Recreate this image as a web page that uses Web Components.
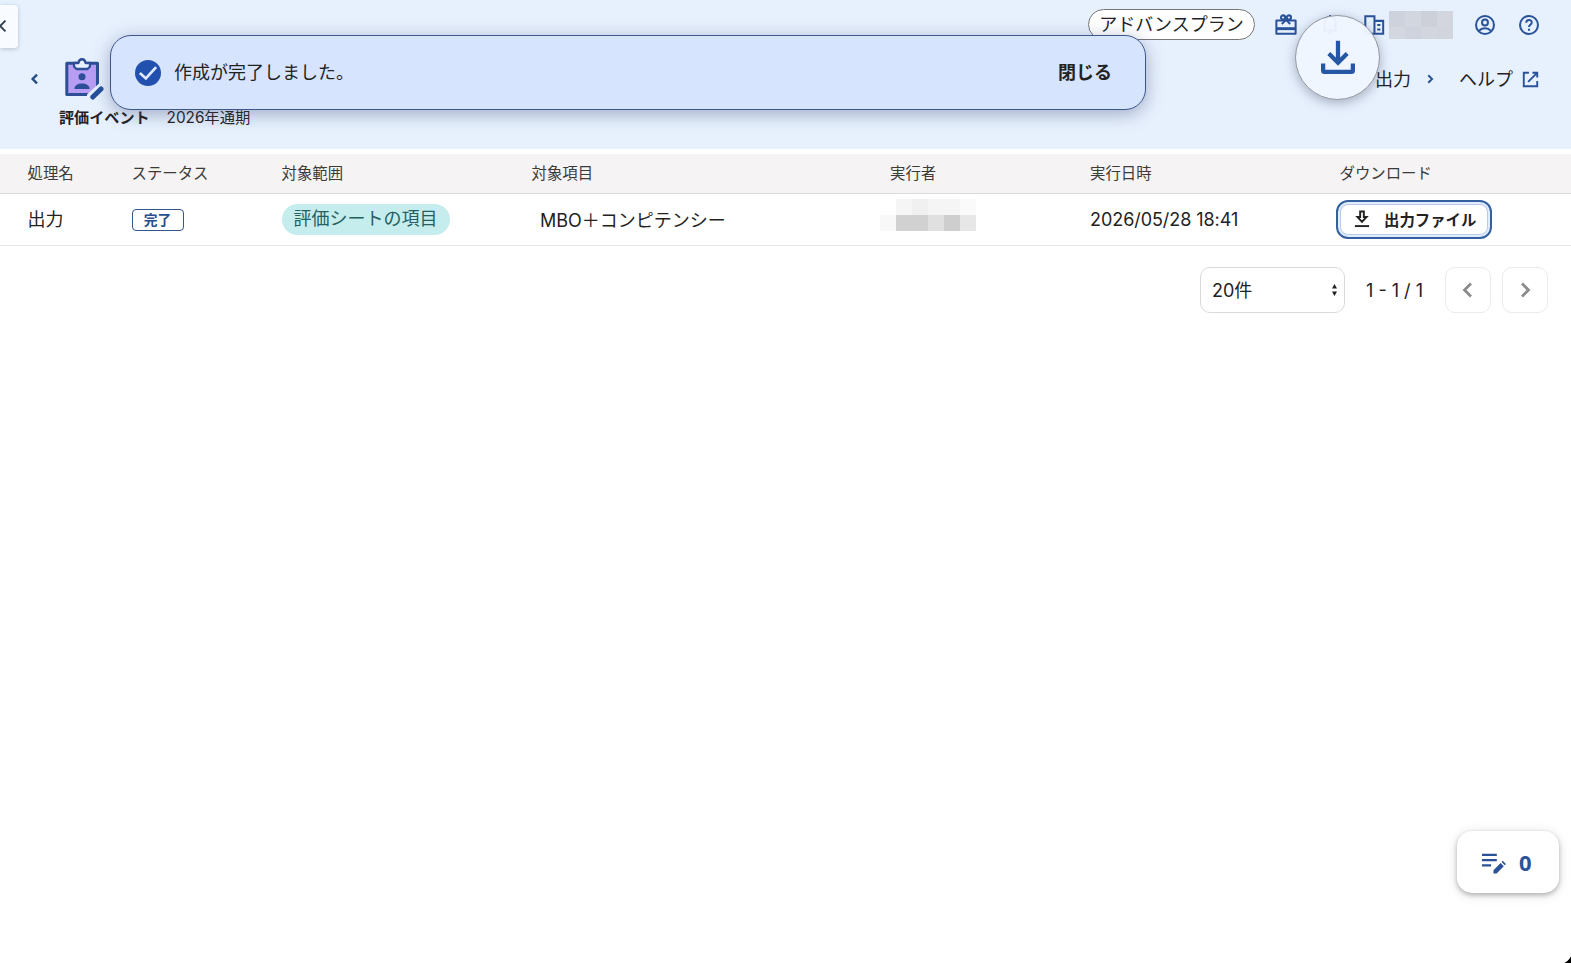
<!DOCTYPE html>
<html lang="ja">
<head>
<meta charset="utf-8">
<title>評価イベント</title>
<style>
  html, body {
    margin: 0;
    height: 100%;
    overflow: hidden;
  }

  body {
    background: #fff;
    color: #23221f;
    font-family: Inter, "Noto Sans CJK JP", sans-serif;
    font-size: 18px;
  }
</style>
</head>
<body>
<app-shell>
  <app-header slot="header">
    <plan-badge slot="tools">アドバンスプラン</plan-badge>
    <span slot="event">評価イベント</span>
    <span slot="term">2026年通期</span>
    <span slot="crumb">出力</span>
    <span slot="help">ヘルプ</span>
  </app-header>
  <toast-message slot="overlay" action="閉じる">作成が完了しました。</toast-message>
  <download-bubble slot="overlay"></download-bubble>
  <job-table></job-table>
  <list-pager size="20件" range="1 - 1 / 1"></list-pager>
  <memo-counter slot="overlay">0</memo-counter>
</app-shell>

<script>
const ICONS = {
  left: '<path d="M15 5.500l-6.500 6.500 6.500 6.500"/>',
  right: '<path d="M9 5.500l6.500 6.500L9 18.500"/>',
  gift: '<path d="M1.500 7h21v14.500h-21z" stroke-linejoin="round"/><path d="M1.500 16h21" stroke-width="3.200"/><path d="M12 6L7.500 11M12 6l4.500 5"/><circle cx="8.800" cy="3.800" r="2.300"/><circle cx="15.200" cy="3.800" r="2.300"/>',
  bell: '<path d="M4 18h16M6 18v-9a6 6 0 0 1 12 0v9M12 1v2M10 21h4"/>',
  building: '<path d="M12.500 7.500V2.500H2.500v19h10M12.500 7.500h9.500v14h-9.500z"/><path d="M15.500 12h3.500M15.500 17h3.500"/>',
  user: '<circle cx="12" cy="12" r="9.800"/><circle cx="12" cy="9.300" r="3.200"/><path d="M5.500 18.500c3.500-4 9.500-4 13 0"/>',
  help: '<circle cx="12" cy="12" r="9.800"/><path d="M9 9.500c0-4 6-4 6-.3 0 2.400-3 2.600-3 5"/><path d="M12 16v2.300"/>',
  external: '<path d="M10 3.500H3.500v17h17V14M14.500 3.500h6v6M20 4L9 15"/>',
  download: '<path d="M12 .5v15M5.500 9.500l6.500 6.500 6.500-6.500M1.500 16.500v5a1 1 0 0 0 1 1h19a1 1 0 0 0 1-1v-5"/>',
  file: '<path d="M9.800 3h4.400v6.500h3.300L12 15.500 6.500 9.500h3.300z"/><path d="M3.500 20.500h17"/>',
  check: '<circle cx="12" cy="12" r="12" fill="currentColor" stroke="none"/><path d="M4.500 12l5.500 5 9.500-10.500" stroke="#dfe9ff"/>',
  memo: '<path d="M1 4h15.500M1 9.500h15.500M1 15h9.500"/><path d="M13 23.500v-3.500l7.500-7.500 3.300 3.300-7.500 7.700zM21.500 11.500l1.200-1.200 3.300 3.300-1.200 1.200z" fill="currentColor" stroke="none"/>'
};

class UiIcon extends HTMLElement {
  static get observedAttributes() {
    return ['name'];
  }

  constructor() {
    super();
    this.attachShadow({ mode: 'open' });
  }

  attributeChangedCallback(name, oldValue, newValue) {
    this.shadowRoot.innerHTML = `
<style>
  :host {
    display: inline-block;
    flex: none;
    width: var(--size, 24px);
    height: var(--size, 24px);
    color: var(--icon-color, #2a5299);
  }

  svg {
    display: block;
    width: 100%;
    height: 100%;
    overflow: visible;
    fill: none;
    stroke: currentColor;
    stroke-width: var(--stroke, 2.2);
  }
</style>
<svg viewBox="0 0 24 24">${ICONS[newValue] || ''}</svg>
`;
  }
}

// Pixelated block that hides a name. Colours are listed row by row.
class MaskBlock extends HTMLElement {
  constructor() {
    super();
    this.attachShadow({ mode: 'open' });
  }

  connectedCallback() {
    const cells = this.getAttribute('cells').split(' ');
    this.shadowRoot.innerHTML = `
<style>
  :host {
    display: grid;
    flex: none;
    grid-template-columns: ${this.getAttribute('cols')};
    grid-template-rows: ${this.getAttribute('rows')};
  }
</style>
${cells.map((c) => `<i style="background:#${c}"></i>`).join('')}
`;
  }
}

class PlanBadge extends HTMLElement {
  constructor() {
    super();
    this.attachShadow({ mode: 'open' }).innerHTML = `
<style>
  :host {
    display: flex;
    align-items: center;
    justify-content: center;
    box-sizing: border-box;
    width: 167px;
    height: 31px;
    padding-bottom: 3px;
    border: 1px solid #77777a;
    border-radius: 16px;
    background: #fff;
    color: #23221f;
    white-space: nowrap;
  }
</style>
<slot></slot>
`;
  }
}

class AppHeader extends HTMLElement {
  constructor() {
    super();
    this.attachShadow({ mode: 'open' }).innerHTML = `
<style>
  :host {
    display: flex;
    height: 149px;
    background: #e7f1fe;
  }

  .rail {
    flex: none;
    box-sizing: border-box;
    width: 18px;
    height: 43px;
    margin-top: 5px;
    padding-top: 12px;
    border-radius: 0 4px 4px 0;
    background: #f8fbff;
    box-shadow: 0 1px 4px rgba(60, 70, 90, .3);
  }

  .rail ui-icon {
    --size: 20px;
    --icon-color: #333d4d;
    margin: -1px 0 0 -7px;
  }

  .main {
    flex: 1;
    display: flex;
    flex-direction: column;
    padding: 9px 31px 0 0;
  }

  .tools, .nav, .titles {
    display: flex;
    align-items: center;
  }

  .tools {
    justify-content: flex-end;
    height: 31px;
  }

  .tools ui-icon {
    --size: 22px;
  }

  .nav {
    height: 44px;
    margin-top: 17px;
    padding-left: 9px;
  }

  .back {
    --size: 16px;
    --stroke: 3.6;
    --icon-color: #264d82;
  }

  .board {
    width: 42px;
    height: 44px;
    margin-left: 19px;
  }

  .links {
    display: flex;
    align-items: center;
    margin-left: auto;
  }

  .links slot {
    display: block;
    padding-bottom: 2px;
  }

  .titles {
    height: 24px;
    margin-top: 5px;
    padding-left: 41px;
    gap: 17px;
    font-size: 15.3px;
    line-height: 24px;
  }

  .titles b {
    font-size: 15.1px;
    font-weight: 700;
  }
</style>
<div class="rail"><ui-icon name="left"></ui-icon></div>
<div class="main">
  <div class="tools">
    <slot name="tools"></slot>
    <ui-icon name="gift" style="margin-left:20px"></ui-icon>
    <ui-icon name="bell" style="margin-left:22px"></ui-icon>
    <ui-icon name="building" style="margin-left:22px"></ui-icon>
    <mask-block style="margin-left:4px" cols="16px 16px 16px 16px" rows="16px 12px"
      cells="ced2dc d2d6df cdd0d9 d3d6df d4d7e0 cfd3dd d3d6df d2d5de"></mask-block>
    <ui-icon name="user" style="margin-left:21px"></ui-icon>
    <ui-icon name="help" style="margin-left:22px"></ui-icon>
  </div>
  <div class="nav">
    <ui-icon class="back" name="left"></ui-icon>
    <svg class="board" viewBox="0 0 42 44">
      <path d="M4.800 6.200h30.700v31.300H4.800z" fill="#b79df3" stroke="#2e4f97" stroke-width="3" stroke-linejoin="round"/>
      <path d="M12 6h4.500c.5-5 6.500-5 7 0H28v3.500L25.500 12h-11L12 9.500z" fill="#e7f1fe" stroke="#2e4f97" stroke-width="2.300" stroke-linejoin="round"/>
      <circle cx="20" cy="19.800" r="3.500" fill="#2e4f97"/>
      <path d="M12.500 32c-1-7.500 16-7.500 15 0z" fill="#2e4f97"/>
      <path d="M25 44v-6.500L37.500 26 44 32v12z" fill="#e7f1fe"/>
      <path d="M30.800 40L39 32" stroke="#26509b" stroke-width="5" stroke-linecap="round"/>
    </svg>
    <div class="links">
      <slot name="crumb"></slot>
      <ui-icon name="right" style="--size:14px;--stroke:3.4;margin:0 22px 0 12px"></ui-icon>
      <slot name="help"></slot>
      <ui-icon name="external" style="--size:19px;--stroke:2.4;margin-left:8px"></ui-icon>
    </div>
  </div>
  <div class="titles"><b><slot name="event"></slot></b><slot name="term"></slot></div>
</div>
`;
  }
}

class ToastMessage extends HTMLElement {
  constructor() {
    super();
    this.attachShadow({ mode: 'open' }).innerHTML = `
<style>
  :host {
    position: absolute;
    top: 35px;
    left: 110px;
    display: flex;
    align-items: center;
    box-sizing: border-box;
    width: 1036px;
    height: 75px;
    padding: 0 33px 0 24px;
    border: 1.500px solid #3d568b;
    border-radius: 21px;
    background: #d6e4fe;
    box-shadow: 0 4px 18px rgba(60, 75, 120, .42);
  }

  ui-icon {
    --size: 26px;
    --icon-color: #2150ae;
    --stroke: 2.5;
    margin-right: 13px;
  }

  p {
    margin: 0;
    padding-bottom: 3px;
  }

  button {
    margin-left: auto;
    padding: 0 0 3px;
    border: 0;
    background: none;
    color: inherit;
    font: inherit;
    font-weight: 700;
  }
</style>
<ui-icon name="check"></ui-icon>
<p><slot></slot></p>
<button type="button"></button>
`;
    this.button = this.shadowRoot.querySelector('button');
    this.button.addEventListener('click', () => this.remove());
  }

  connectedCallback() {
    this.button.textContent = this.getAttribute('action');
  }
}

class DownloadBubble extends HTMLElement {
  constructor() {
    super();
    this.attachShadow({ mode: 'open' }).innerHTML = `
<style>
  :host {
    position: absolute;
    top: 15px;
    left: 1295px;
    display: flex;
    align-items: center;
    justify-content: center;
    box-sizing: border-box;
    width: 85px;
    height: 85px;
    border: 1px solid #8d929b;
    border-radius: 50%;
    background: rgba(240, 246, 255, .96);
    box-shadow: 0 3px 12px rgba(60, 70, 95, .4);
  }

  ui-icon {
    --size: 34px;
    --stroke: 3;
    --icon-color: #2458a4;
    margin-bottom: 1px;
  }
</style>
<ui-icon name="download"></ui-icon>
`;
  }
}

class JobTable extends HTMLElement {
  constructor() {
    super();
    this.attachShadow({ mode: 'open' }).innerHTML = `
<style>
  :host {
    display: block;
    margin-top: 5px;
  }

  .row {
    display: grid;
    grid-template-columns: 104px 150px 250px 358.5px 200px 249.5px 1fr;
    align-items: center;
    box-sizing: border-box;
    height: 52px;
    padding-left: 27.5px;
    border-bottom: 1.500px solid #e6e6e6;
  }

  .head {
    height: 40px;
    padding-bottom: 3px;
    background: #f5f3f4;
    border-color: #dcdadb;
    color: #3c3b39;
    font-size: 15.4px;
  }

  .status {
    display: inline-flex;
    align-items: center;
    justify-content: center;
    box-sizing: border-box;
    width: 52px;
    height: 22px;
    padding-bottom: 2px;
    border: 1.500px solid #31578d;
    border-radius: 4px;
    color: #264f8e;
    font-size: 13.8px;
    font-weight: 700;
  }

  .row > div {
    display: flex;
    align-items: center;
    white-space: nowrap;
  }

  .row > .text {
    padding-bottom: 3px;
  }

  .scope {
    padding: 0 12px 2px;
    border-radius: 16px;
    background: #c5edee;
    color: #25605f;
    line-height: 29px;
  }

  .item {
    padding: 0 0 1px 8.5px;
  }

  .date {
    letter-spacing: -.06px;
  }

  mask-block {
    margin: -9px 0 0 -10.5px;
  }

  button {
    display: flex;
    align-items: center;
    gap: 12px;
    box-sizing: border-box;
    width: 156px;
    height: 39px;
    margin-left: -3.5px;
    padding: 0 0 2px 14px;
    border: 2.500px solid #35609f;
    border-radius: 12px;
    background: #fff;
    box-shadow: inset 0 0 0 2px #e1edff, inset 0 0 0 3px #bacce9;
    color: #23221f;
    font: inherit;
    font-size: 15.4px;
    font-weight: 700;
    white-space: nowrap;
  }
</style>
<div class="row head">
  <div>処理名</div><div>ステータス</div><div>対象範囲</div><div>対象項目</div>
  <div>実行者</div><div>実行日時</div><div>ダウンロード</div>
</div>
<div class="row">
  <div class="text">出力</div>
  <div><span class="status">完了</span></div>
  <div><span class="scope">評価シートの項目</span></div>
  <div class="item">MBO＋コンピテンシー</div>
  <div><mask-block cols="repeat(6, 16px)" rows="16px 16px"
    cells="ffffff f5f5f5 f0f0f0 f5f5f5 f5f5f5 fafafa f8f8f8 d1d1d1 d1d1d1 e0e0e0 cecece e7e7e7"></mask-block></div>
  <div class="date">2026/05/28 18:41</div>
  <div><button type="button"><ui-icon name="file" style="--size:20px;--icon-color:#23221f;--stroke:2.3"></ui-icon>出力ファイル</button></div>
</div>
`;
  }
}

class ListPager extends HTMLElement {
  constructor() {
    super();
    this.attachShadow({ mode: 'open' }).innerHTML = `
<style>
  :host {
    display: flex;
    align-items: center;
    justify-content: flex-end;
    height: 46px;
    margin: 21px 23px 0 0;
  }

  .size, .page {
    display: flex;
    align-items: center;
    box-sizing: border-box;
    height: 46px;
    border: 1.500px solid #dadada;
    border-radius: 10px;
    background: #fff;
  }

  .size {
    justify-content: space-between;
    width: 145px;
    padding: 0 6px 0 11px;
  }

  .size span {
    padding-bottom: 2px;
  }

  .size svg {
    width: 7px;
    height: 14px;
  }

  .range {
    width: 59px;
    margin: 0 20px 0 21px;
    white-space: nowrap;
  }

  .page {
    justify-content: center;
    width: 46px;
    border-color: #ebebeb;
  }

  .page + .page {
    margin-left: 11px;
  }

  .page ui-icon {
    --size: 24px;
    --stroke: 2.8;
    --icon-color: #8b8b8b;
  }
</style>
<div class="size"><span></span><svg viewBox="0 0 7 14"><path d="M3.500 1L6 5.500H1zM3.500 13L1 8.500h5z" fill="#23221f"/></svg></div>
<div class="range"></div>
<div class="page"><ui-icon name="left"></ui-icon></div>
<div class="page"><ui-icon name="right"></ui-icon></div>
`;
  }

  connectedCallback() {
    this.shadowRoot.querySelector('.size span').textContent = this.getAttribute('size');
    this.shadowRoot.querySelector('.range').textContent = this.getAttribute('range');
  }
}

class MemoCounter extends HTMLElement {
  constructor() {
    super();
    this.attachShadow({ mode: 'open' }).innerHTML = `
<style>
  :host {
    position: absolute;
    top: 831px;
    left: 1457px;
    display: flex;
    align-items: center;
    gap: 15px;
    box-sizing: border-box;
    width: 102px;
    height: 62px;
    padding-left: 24px;
    border-radius: 15px;
    background: #fff;
    box-shadow: 0 2px 5px rgba(0, 0, 0, .28), 0 2px 14px rgba(0, 0, 0, .1);
    color: #2a5299;
    font-family: "Noto Sans", sans-serif;
    font-size: 22px;
    font-weight: 700;
  }

  ui-icon {
    --size: 23px;
    --stroke: 2.5;
  }
</style>
<ui-icon name="memo"></ui-icon>
<slot></slot>
`;
  }
}

class AppShell extends HTMLElement {
  constructor() {
    super();
    this.attachShadow({ mode: 'open' }).innerHTML = `
<style>
  :host {
    position: relative;
    display: block;
    height: 100vh;
    overflow: hidden;
    background: radial-gradient(circle at 0 0, #fff 14px, #000 14.8px) right bottom / 13px 13px no-repeat, #fff;
  }
</style>
<slot name="header"></slot>
<slot></slot>
<slot name="overlay"></slot>
`;
  }
}

customElements.define('ui-icon', UiIcon);
customElements.define('mask-block', MaskBlock);
customElements.define('plan-badge', PlanBadge);
customElements.define('app-header', AppHeader);
customElements.define('toast-message', ToastMessage);
customElements.define('download-bubble', DownloadBubble);
customElements.define('job-table', JobTable);
customElements.define('list-pager', ListPager);
customElements.define('memo-counter', MemoCounter);
customElements.define('app-shell', AppShell);
</script>
</body>
</html>
